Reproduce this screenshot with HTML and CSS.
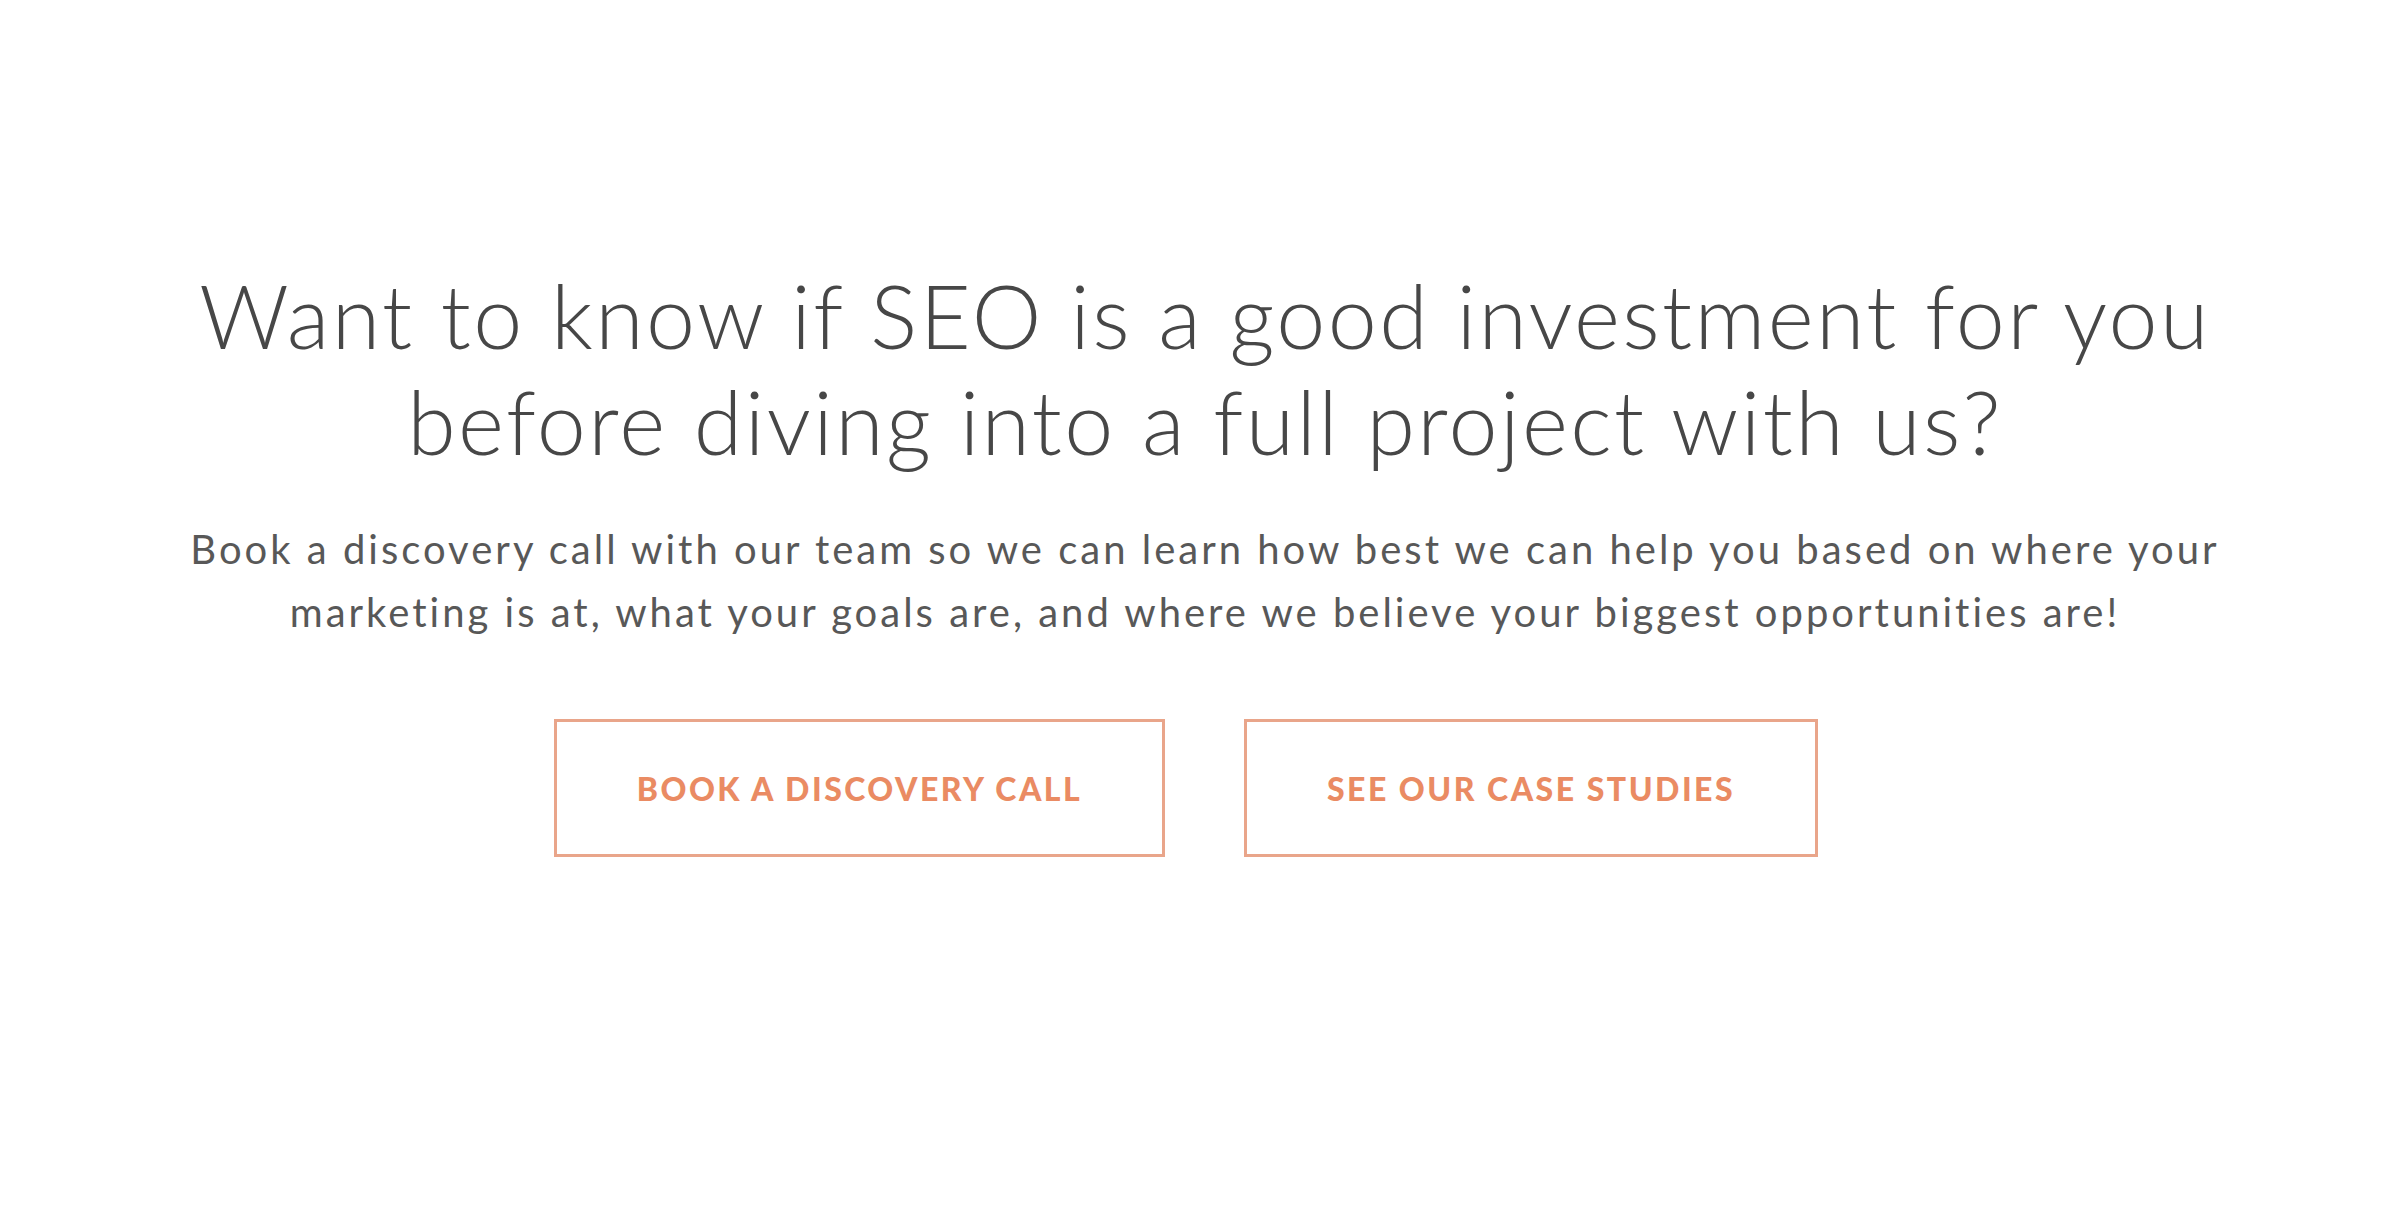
FILE: index.html
```html
<html>
  <head>
    <link rel="stylesheet" href="styles.css">
  </head>
  <body>
    <div class="cta">
      <h2>Want to know if SEO is a good investment for you<br>before diving into a full project with us?</h2>
      <p>Book a discovery call with our team so we can learn how best we can help you based on where your<br>marketing is at, what your goals are, and where we believe your biggest opportunities are!</p>
      <div class="actions">
        <a class="btn" href="#">Book a discovery call</a>
        <a class="btn" href="#">See our case studies</a>
      </div>
    </div>
  </body>
</html>
```

FILE: styles.css
```css
body {
  margin: 0;
  background: #fff;
  font-family: Lato, "Open Sans", sans-serif;
}
.cta {
  padding: 262px 0 0 10px;
  text-align: center;
}
h2 {
  margin: 0;
  font-size: 88px;
  font-weight: 300;
  line-height: 106px;
  letter-spacing: 2.4px;
  color: #474747;
}
p {
  margin: 44px 0 0;
  font-size: 40px;
  font-weight: 400;
  line-height: 63px;
  letter-spacing: 3px;
  color: #585858;
}
.actions {
  display: flex;
  justify-content: center;
  gap: 79px;
  margin-top: 75px;
  padding-right: 38px;
}
.btn {
  display: flex;
  align-items: center;
  justify-content: center;
  height: 138px;
  box-sizing: border-box;
  border: 3px solid #e9a58a;
  color: #ea8b63;
  font-size: 32px;
  font-weight: 900;
  letter-spacing: 2.5px;
  text-transform: uppercase;
  text-decoration: none;
}
.btn:first-child {
  width: 611px;
}
.btn:last-child {
  width: 574px;
}
```
